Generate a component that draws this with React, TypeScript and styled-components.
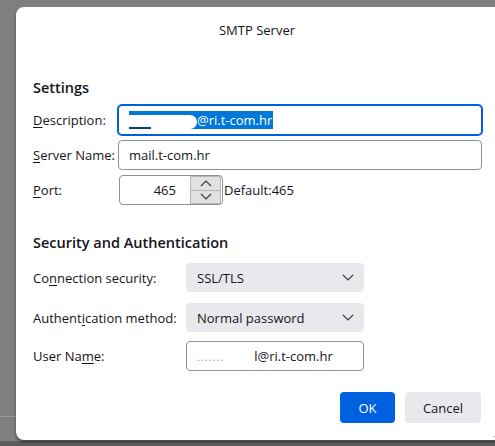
import React from "react";
import styled, { createGlobalStyle } from "styled-components";

const Global = createGlobalStyle`
  html, body { margin: 0; padding: 0; }
  body {
    background: #7f7f7f;
    font-family: "Open Sans", "Noto Sans", sans-serif;
    color: #15141a;
    overflow: hidden;
  }
`;

const Backdrop = styled.div`
  width: 495px;
  height: 446px;
  overflow: hidden;
  position: relative;
  padding: 7px 0 0 16px;
  box-sizing: border-box;
  background: linear-gradient(#7f7f7f 0, #7f7f7f 441px, #5c5c5c 441px);
`;

const BackLine = styled.div`
  position: absolute;
  left: 0;
  top: 416px;
  width: 16px;
  height: 1px;
  background: #9a9a9a;
`;

const Dialog = styled.div`
  width: 490px;
  height: 433px;
  background: #fff;
  border-radius: 8px;
  box-shadow: 0 2px 3px rgba(0, 0, 0, 0.45);
  box-sizing: border-box;
  padding: 0 25px 0 17px;
  display: flex;
  flex-direction: column;
  position: relative;
`;

const Title = styled.div`
  font-size: 13px;
  text-align: center;
  padding: 13px 0 0 0;
  height: 20px;
  line-height: 20px;
`;

const SectionTitle = styled.div`
  font-size: 14.5px;
  font-weight: 600;
  line-height: 20px;
  margin-top: ${(p: { $top: number }) => p.$top}px;
`;

const Row = styled.div<{ $top: number; $labelW: number }>`
  display: grid;
  grid-template-columns: ${(p) => p.$labelW}px auto;
  align-items: center;
  margin-top: ${(p) => p.$top}px;
`;

const Label = styled.label`
  font-size: 13px;
  line-height: 18px;
  white-space: nowrap;
  u { text-decoration: underline; text-underline-offset: 2px; }
`;

const TextBox = styled.div<{ $focused?: boolean; $w: number }>`
  width: ${(p) => p.$w}px;
  height: 30px;
  box-sizing: border-box;
  border: 1px solid ${(p) => (p.$focused ? "#0061e0" : "#8f8f9d")};
  box-shadow: ${(p) => (p.$focused ? "0 0 0 1px #0061e0" : "none")};
  border-radius: 4px;
  display: flex;
  align-items: center;
  padding: 0 10px;
  font-size: 13px;
  white-space: nowrap;
  background: #fff;
`;

const Selected = styled.span`
  background: #0078d7;
  color: #fff;
  line-height: 18px;
  position: relative;
  padding-right: 1px;
`;

const Blob = styled.span<{ $w: number }>`
  display: inline-block;
  width: ${(p) => p.$w}px;
  height: 14px;
  vertical-align: middle;
  background: #fff;
  border-radius: 0 7px 7px 0;
  position: relative;
`;

const Dash = styled.span`
  position: absolute;
  left: 0;
  bottom: 0;
  width: 22px;
  height: 2px;
  background: #0a3d7a;
`;

const PortWrap = styled.div`
  display: flex;
  align-items: center;
`;

const PortBox = styled.div`
  width: 104px;
  height: 30px;
  box-sizing: border-box;
  border: 1px solid #8f8f9d;
  border-radius: 4px;
  display: flex;
  align-items: center;
  font-size: 13px;
  background: #fff;
`;

const PortValue = styled.div`
  flex: 1;
  text-align: right;
  padding-right: 14px;
`;

const Spinner = styled.div`
  width: 31px;
  height: 28px;
  display: flex;
  flex-direction: column;
  margin-right: 1px;
`;

const SpinBtn = styled.div`
  flex: 1;
  background: #e1e1e4;
  border: 1px solid #b4b4b9;
  display: flex;
  align-items: center;
  justify-content: center;
  box-sizing: border-box;
  & + & { border-top: none; }
`;

const Hint = styled.span`
  font-size: 13px;
  margin-left: 1px;
`;

const Select = styled.div<{ $w: number }>`
  width: ${(p) => p.$w}px;
  height: 29px;
  box-sizing: border-box;
  border-radius: 4px;
  background: #e9e9ed;
  display: flex;
  align-items: center;
  justify-content: space-between;
  padding: 0 10px 0 11px;
  font-size: 13px;
`;

const Faint = styled.span`
  color: #9b9b9b;
  letter-spacing: 1px;
  font-size: 11px;
  margin-right: 30px;
`;

const Footer = styled.div`
  display: flex;
  justify-content: flex-end;
  gap: 10px;
  margin-top: 21px;
`;

const Button = styled.button<{ $primary?: boolean; $w: number }>`
  width: ${(p) => p.$w}px;
  height: 31px;
  border: none;
  border-radius: 4px;
  font-family: inherit;
  font-size: 13px;
  background: ${(p) => (p.$primary ? "#0061e0" : "#e9e9ed")};
  color: ${(p) => (p.$primary ? "#fff" : "#15141a")};
  padding: 0;
`;

const Grip = styled.svg`
  position: absolute;
  right: 4px;
  bottom: 2px;
`;

const Chevron = ({ up }: { up?: boolean }) => (
  <svg width="12" height="7" viewBox="0 0 12 7">
    <path
      d={up ? "M1 6 L6 1 L11 6" : "M1 1 L6 6 L11 1"}
      fill="none"
      stroke="#3a3a3a"
      strokeWidth="1.2"
    />
  </svg>
);

const SelectChevron = () => (
  <svg width="12" height="7" viewBox="0 0 12 7">
    <path d="M1 1 L6 6 L11 1" fill="none" stroke="#3a3a3a" strokeWidth="1.2" />
  </svg>
);

export default function App() {
  return (
    <>
      <Global />
      <Backdrop>
        <BackLine />
        <Dialog>
          <Title>SMTP Server</Title>
          <SectionTitle $top={38}>Settings</SectionTitle>
          <Row $top={7} $labelW={85}>
            <Label>
              <u>D</u>escription:
            </Label>
            <TextBox $focused $w={364}>
              <Selected>
                <Blob $w={68}>
                  <Dash />
                </Blob>
                @ri.t-com.hr
              </Selected>
            </TextBox>
          </Row>
          <Row $top={5} $labelW={85}>
            <Label>
              <u>S</u>erver Name:
            </Label>
            <TextBox $w={364}>mail.t-com.hr</TextBox>
          </Row>
          <Row $top={5} $labelW={86}>
            <Label>
              <u>P</u>ort:
            </Label>
            <PortWrap>
              <PortBox>
                <PortValue>465</PortValue>
                <Spinner>
                  <SpinBtn>
                    <Chevron up />
                  </SpinBtn>
                  <SpinBtn>
                    <Chevron />
                  </SpinBtn>
                </Spinner>
              </PortBox>
              <Hint>Default:465</Hint>
            </PortWrap>
          </Row>
          <SectionTitle $top={28}>Security and Authentication</SectionTitle>
          <Row $top={10} $labelW={153}>
            <Label>
              Co<u>n</u>nection security:
            </Label>
            <Select $w={178}>
              <span>SSL/TLS</span>
              <SelectChevron />
            </Select>
          </Row>
          <Row $top={11} $labelW={153}>
            <Label>
              Authent<u>i</u>cation method:
            </Label>
            <Select $w={178}>
              <span>Normal password</span>
              <SelectChevron />
            </Select>
          </Row>
          <Row $top={9} $labelW={153}>
            <Label>
              User Na<u>m</u>e:
            </Label>
            <TextBox $w={178}>
              <Faint>.......</Faint>l@ri.t-com.hr
            </TextBox>
          </Row>
          <Footer>
            <Button $primary $w={55}>OK</Button>
            <Button $w={76}>Cancel</Button>
          </Footer>
          <Grip width="10" height="10" viewBox="0 0 10 10">
            <path d="M9 2 L2 9 M9 6 L6 9" stroke="#8a8a8a" strokeWidth="1" />
          </Grip>
        </Dialog>
      </Backdrop>
    </>
  );
}
